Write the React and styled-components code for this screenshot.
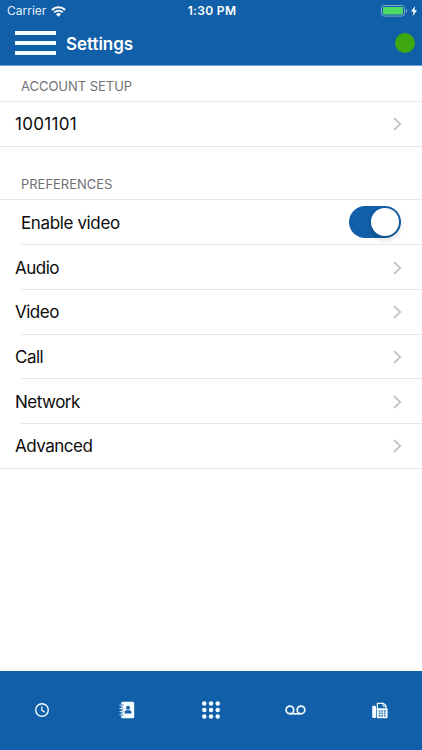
import React from 'react';
import styled, { createGlobalStyle } from 'styled-components';

const GlobalStyle = createGlobalStyle`
	* {
		box-sizing: border-box;
	}
	body {
		margin: 0;
		background: #fff;
		font-family: Inter, 'Liberation Sans', sans-serif;
	}
`;

const Screen = styled.div`
	display: flex;
	flex-direction: column;
	width: 422px;
	height: 750px;
	overflow: hidden;
`;

const Header = styled.header`
	height: 66px;
	background: #115fa8;
	border-bottom: 1px solid #6fa3d6;
	color: #fff;
`;

const StatusBar = styled.div`
	display: grid;
	grid-template-columns: 1fr auto 1fr;
	align-items: center;
	height: 22px;
	padding: 0 5px 0 7px;
`;

const StatusGroup = styled.div`
	display: flex;
	align-items: center;
	justify-content: ${props => props.justify || 'flex-start'};
	gap: ${props => props.gap};
`;

const Carrier = styled.span`
	font-size: 12px;
	line-height: 22px;
	color: #e4f0fb;
`;

const Clock = styled.span`
	font-size: 12px;
	font-weight: 600;
	line-height: 22px;
	letter-spacing: 0.35px;
`;

const NavBar = styled.div`
	display: flex;
	align-items: center;
	height: 43px;
	padding: 0 7px 0 15px;
`;

const MenuButton = styled.button`
	display: flex;
	flex-direction: column;
	gap: 6px;
	width: 41px;
	margin-bottom: 2px;
	padding: 0;
	border: 0;
	background: none;
`;

const MenuLine = styled.span`
	height: 4px;
	background: #f2fbff;
`;

const Title = styled.h1`
	flex: 1;
	margin: 0 0 0 10px;
	font-size: 17px;
	font-weight: 600;
	line-height: 22px;
	letter-spacing: -0.05px;
`;

const Presence = styled.span`
	width: 20px;
	height: 20px;
	margin-bottom: 1px;
	border-radius: 50%;
	background: #3ea70f;
`;

const Content = styled.main`
	flex: 1;
`;

const SectionHeader = styled.h2`
	display: flex;
	align-items: flex-end;
	height: ${props => props.height};
	margin: 0;
	padding: 0 21px 7px;
	border-bottom: 1px solid #e9e9eb;
	font-size: 13px;
	font-weight: 400;
	line-height: 16px;
	letter-spacing: -0.03px;
	color: #707075;
`;

const Row = styled.div`
	display: flex;
	align-items: center;
	justify-content: space-between;
	height: 44.7px;
	padding: 0 20px 0 ${props => (props.indent ? '21px' : '15px')};
	background: linear-gradient(#e6e6e8, #e6e6e8) right bottom /
		${props => (props.last ? '100%' : '401px')} 1px no-repeat;
`;

const Label = styled.span`
	font-size: 17px;
	line-height: 22px;
	letter-spacing: ${props => props.spacing || '-0.5px'};
	color: #0b0b0c;
`;

const Switch = styled.span`
	display: flex;
	justify-content: flex-end;
	width: 52px;
	height: 32px;
	margin: 0 1px 2px 0;
	padding: 2px;
	border-radius: 16px;
	background: #115fa8;
`;

const Knob = styled.span`
	width: 28px;
	height: 28px;
	border-radius: 50%;
	background: #fff;
	box-shadow: 0 3px 6px rgba(0, 0, 0, 0.2);
`;

const TabBar = styled.nav`
	display: grid;
	grid-template-columns: repeat(5, 1fr);
	height: 79px;
	padding-bottom: 1px;
	background: #115fa8;
`;

const Tab = styled.button`
	display: flex;
	align-items: center;
	justify-content: center;
	padding: 0;
	border: 0;
	background: none;
	color: #f4fbff;
`;

const Chevron = () => (
	<svg width="9" height="14" viewBox="0 0 9 14" fill="none">
		<path d="M1 1l6.2 6L1 13" stroke="#c5c5c9" strokeWidth="1.8" />
	</svg>
);

const WifiIcon = () => (
	<svg width="15" height="11" viewBox="0 0 15 11" fill="none" stroke="#fff">
		<path d="M.9 4a9.4 9.4 0 0 1 13.2 0" strokeWidth="1.9" />
		<path d="M3.2 6.4a6.1 6.1 0 0 1 8.6 0" strokeWidth="1.8" />
		<path d="M7.5 10.7L5 8.2a3.6 3.6 0 0 1 5 0z" fill="#fff" stroke="none" />
	</svg>
);

const BatteryIcon = () => (
	<svg width="27" height="12" viewBox="0 0 27 12">
		<rect x=".5" y=".5" width="23" height="10.6" rx="2.6" fill="none" stroke="#7fa9cf" />
		<rect x="2" y="2" width="20" height="7.6" rx="1.2" fill="#4cd964" />
		<path d="M25 3.8a2.3 2.3 0 0 1 0 4z" fill="#7fa9cf" />
	</svg>
);

const BoltIcon = () => (
	<svg width="6" height="10" viewBox="0 0 6 10">
		<path d="M4.2 0L0 5.6h2.5L1.7 10 6 4.2H3.4z" fill="#fff" />
	</svg>
);

const HistoryIcon = () => (
	<svg width="14" height="14" viewBox="0 0 14 14" fill="none" stroke="currentColor">
		<circle cx="7" cy="7" r="6.3" strokeWidth="1.4" />
		<path d="M6.8 3.2v3.9l2.9 2.2" strokeWidth="1.2" />
	</svg>
);

const ContactsIcon = () => (
	<svg width="16" height="18" viewBox="0 0 16 18" fill="none">
		<rect x="2.2" y=".7" width="13" height="16.6" rx="1.6" fill="currentColor" />
		<path
			d="M1 4.2h2.4M1 7.4h2.4M1 10.6h2.4M1 13.8h2.4"
			stroke="#115fa8"
			strokeWidth="2"
			strokeLinecap="round"
		/>
		<path
			d="M.9 4.2h2.7M.9 7.4h2.7M.9 10.6h2.7M.9 13.8h2.7"
			stroke="currentColor"
			strokeWidth=".9"
			strokeLinecap="round"
		/>
		<circle cx="9" cy="6.7" r="2" fill="#115fa8" />
		<path d="M5.7 12.4v-1.1c0-1.3 1-2 2.2-2h2.2c1.3 0 2.3.7 2.3 2v1.1z" fill="#115fa8" />
	</svg>
);

const KeypadIcon = () => (
	<svg width="18" height="18" viewBox="0 0 18 18" fill="currentColor">
		{[2.6, 9, 15.4].map(y =>
			[2.3, 9, 15.7].map(x => <circle key={`${x}-${y}`} cx={x} cy={y} r="2.25" />)
		)}
	</svg>
);

const VoicemailIcon = () => (
	<svg width="21" height="10" viewBox="0 0 21 10" fill="none" stroke="currentColor" strokeWidth="1.7">
		<circle cx="4.9" cy="4.9" r="3.8" />
		<circle cx="16" cy="4.9" r="3.8" />
		<path d="M4.9 8.8H16" />
	</svg>
);

const FaxIcon = () => (
	<svg width="16" height="17" viewBox="0 0 16 17" fill="none">
		<rect x=".2" y="3.7" width="3.9" height="12.3" rx="1.2" fill="currentColor" />
		<path d="M5.4 7V1.3h6.1L14 3.8V7" stroke="currentColor" strokeWidth="1.2" />
		<path d="M11 .9v3.3h3.4" stroke="currentColor" strokeWidth="1" />
		<rect x="4.8" y="6.2" width="10.8" height="10" rx="1" fill="currentColor" />
		<path
			d="M6.7 9h1.8M9.3 9h1.8M11.9 9h1.8M6.7 11.4h1.8M9.3 11.4h1.8M11.9 11.4h1.8M6.7 13.8h1.8M9.3 13.8h1.8M11.9 13.8h1.8"
			stroke="#3d7fbd"
			strokeWidth="1.6"
		/>
	</svg>
);

const preferences = ['Audio', 'Video', 'Call', 'Network', 'Advanced'];

const tabs = [
	{ name: 'History', Icon: HistoryIcon },
	{ name: 'Contacts', Icon: ContactsIcon },
	{ name: 'Keypad', Icon: KeypadIcon },
	{ name: 'Voicemail', Icon: VoicemailIcon },
	{ name: 'Fax', Icon: FaxIcon },
];

const App = () => {
	return (
		<Screen>
			<GlobalStyle />
			<Header>
				<StatusBar>
					<StatusGroup gap="5px">
						<Carrier>Carrier</Carrier>
						<WifiIcon />
					</StatusGroup>
					<Clock>1:30 PM</Clock>
					<StatusGroup justify="flex-end" gap="3px">
						<BatteryIcon />
						<BoltIcon />
					</StatusGroup>
				</StatusBar>
				<NavBar>
					<MenuButton aria-label="Menu">
						<MenuLine />
						<MenuLine />
						<MenuLine />
					</MenuButton>
					<Title>Settings</Title>
					<Presence />
				</NavBar>
			</Header>
			<Content>
				<SectionHeader height="36px">ACCOUNT SETUP</SectionHeader>
				<Row last>
					<Label spacing="0.3px">1001101</Label>
					<Chevron />
				</Row>
				<SectionHeader height="53.8px">PREFERENCES</SectionHeader>
				<Row indent>
					<Label spacing="-0.37px">Enable video</Label>
					<Switch>
						<Knob />
					</Switch>
				</Row>
				{preferences.map((name, i) => (
					<Row key={name} last={i === preferences.length - 1}>
						<Label>{name}</Label>
						<Chevron />
					</Row>
				))}
			</Content>
			<TabBar>
				{tabs.map(({ name, Icon }) => (
					<Tab key={name} aria-label={name}>
						<Icon />
					</Tab>
				))}
			</TabBar>
		</Screen>
	);
};

export default App;
